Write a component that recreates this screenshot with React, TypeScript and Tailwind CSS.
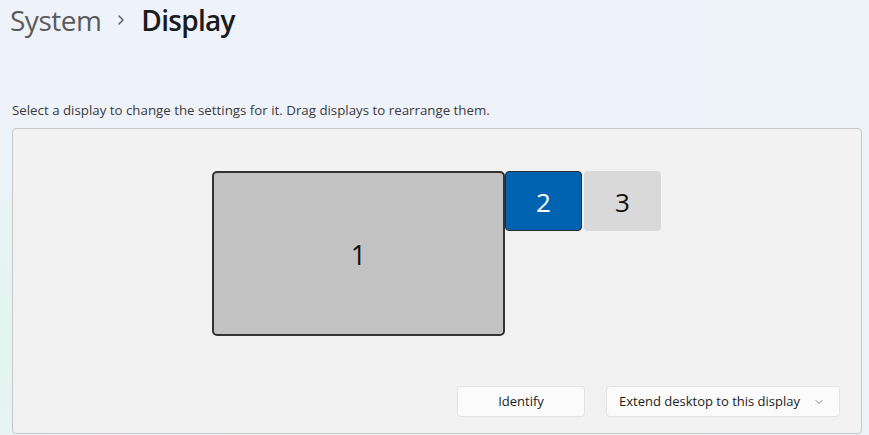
import { ChevronRight, ChevronDown } from 'lucide-react'

const font = { fontFamily: '"Open Sans", "Noto Sans", sans-serif' }

export default function App() {
  return (
    <div
      className="w-[869px] h-[435px] overflow-hidden bg-[radial-gradient(circle_at_0%_78%,#e3f5ee_0,transparent_240px),linear-gradient(90deg,#eef2fa_0%,#eef2fa_80%,#ebf3f6_100%)] text-[#1b1b1b]"
      style={font}
    >
      {/* breadcrumb header */}
      <div className="flex items-center h-[40px] pl-[10px]">
        <span className="text-[28px] leading-none font-medium text-[#5b5b5b] tracking-[-0.5px]">System</span>
        <ChevronRight className="w-[16px] h-[16px] mx-[12px] text-[#5d5d5d]" strokeWidth={2.2} />
        <span className="text-[28px] leading-none font-semibold text-[#1b1b1b] tracking-[-0.7px]">Display</span>
      </div>

      <p className="mt-[62px] pl-[12px] text-[13.3px] leading-[16px] text-[#3b3b3b]">
        Select a display to change the settings for it. Drag displays to rearrange them.
      </p>

      {/* arrangement panel */}
      <div className="ml-[12px] mt-[10px] w-[850px] h-[306px] rounded-[4px] border border-[#c8c8c8] bg-[#f2f2f2] flex flex-col">
        <div className="relative flex-1">
          <div className="absolute left-[199px] top-[42px] w-[293px] h-[165px] rounded-[5px] border-2 border-[#333333] bg-[#c2c2c2] flex items-center justify-center pt-[4px] text-[27px] text-[#111]">
            1
          </div>
          <div className="absolute left-[492px] top-[42px] w-[77px] h-[60px] rounded-[4px] border border-[#2b2b2b] bg-[#0063b1] flex items-center justify-center pt-[2px] text-[26px] text-white">
            2
          </div>
          <div className="absolute left-[571px] top-[42px] w-[77px] h-[60px] rounded-[4px] bg-[#d9d9d9] flex items-center justify-center pt-[2px] text-[26px] text-[#111]">
            3
          </div>
        </div>

        <div className="flex justify-end gap-[21px] pr-[21px] pb-[16px]">
          <button className="w-[128px] h-[31px] rounded-[4px] border border-[#e3e3e3] bg-[#fbfbfb] text-[13px] text-[#1b1b1b]">
            Identify
          </button>
          <button className="w-[234px] h-[31px] rounded-[4px] border border-[#e3e3e3] bg-[#fbfbfb] text-[13px] text-[#1b1b1b] flex items-center justify-between pl-[12px] pr-[14px]">
            <span>Extend desktop to this display</span>
            <ChevronDown className="w-[12px] h-[12px] text-[#5d5d5d]" strokeWidth={1.6} />
          </button>
        </div>
      </div>
    </div>
  )
}
